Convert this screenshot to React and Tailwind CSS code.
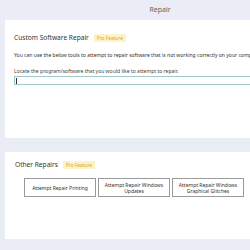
import React from "react";

const ProBadge = () => (
  <span className="ml-[5px] px-[3px] py-[1px] bg-[#fdf3c8] text-[#e2a62c] text-[4.8px] leading-[6px]">
    Pro Feature
  </span>
);

const RepairButton = ({ children }) => (
  <button className="w-[72px] h-[19px] border border-[#9a9a9a] bg-white text-[5px] leading-[6px] text-[#333] flex items-center justify-center text-center px-[4px]">
    {children}
  </button>
);

export default function App() {
  return (
    <div
      className="w-[250px] h-[250px] overflow-hidden bg-[#eaecf6] text-[#333]"
      style={{ fontFamily: '"Noto Sans", "Open Sans", sans-serif' }}
    >
      <div className="h-[20px] w-[320px] flex items-center justify-center text-[7px] text-[#666]">
        Repair
      </div>

      <div className="ml-[5px] w-[340px] h-[118px] bg-white pl-[9px] pt-[12px]">
        <div className="flex items-center">
          <span className="text-[6.6px] leading-[12px] text-[#333]">Custom Software Repair</span>
          <ProBadge />
        </div>
        <p className="mt-[8px] text-[5.05px] leading-[7px] whitespace-nowrap text-[#333]">
          You can use the below tools to attempt to repair software that is not working correctly on your computer.
        </p>
        <p className="mt-[9px] text-[5.05px] leading-[7px] whitespace-nowrap text-[#444]">
          Locate the program/software that you would like to attempt to repair.
        </p>
        <div className="mt-[1px] h-[9px] w-full border border-[#9fc9c9] flex items-center pl-[1px]">
          <span className="w-px h-[6px] bg-[#333]" />
        </div>
      </div>

      <div className="ml-[5px] mt-[14px] w-[340px] h-[87px] bg-white pl-[10px] pt-[8px]">
        <div className="flex items-center">
          <span className="text-[6.6px] leading-[10px] text-[#333]">Other Repairs</span>
          <ProBadge />
        </div>
        <div className="mt-[8px] ml-[9px] flex gap-[2px]">
          <RepairButton>Attempt Repair Printing</RepairButton>
          <RepairButton>Attempt Repair Windows Updates</RepairButton>
          <RepairButton>Attempt Repair Windows Graphical Glitches</RepairButton>
        </div>
      </div>
    </div>
  );
}
